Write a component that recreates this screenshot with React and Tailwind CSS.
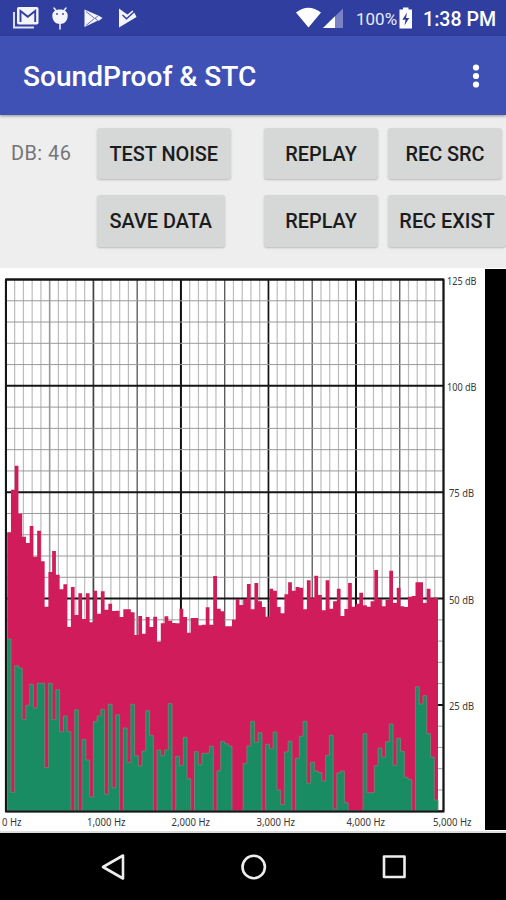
import { useState } from "react";

const ZERO = 811
const BAR = 3.746
const START = 7.2

// top edge of every bar, left to right
const sourceTops = [
    532.3, 489.7, 465.7, 513.7, 536.7, 543, 526, 556.7, 530.7, 561.3, 606.7, 572, 551, 574.7, 589.3, 584.3,
    627, 587, 615, 593.3, 619, 593.3, 622.3, 590.7, 613.7, 591.3, 609.7, 603.7, 611, 610.7, 617, 609.3,
    609.3, 612.3, 635, 616, 633.7, 617, 627, 616.7, 641.7, 623.3, 616.3, 620.7, 623, 623.3, 608.7, 617,
    632.7, 618, 618, 625.3, 624.7, 607.3, 624.7, 576, 608.7, 611.3, 626.3, 626.3, 619.7, 599, 605, 599,
    584, 609.3, 583, 601.3, 607, 616.7, 588.7, 590.7, 607, 613.3, 594.3, 582.3, 590.7, 587, 587.7, 609.3,
    580.3, 598.3, 575.7, 595, 610.3, 580.3, 608.7, 601.3, 588.7, 616, 609, 583, 606.7, 603.7, 592.7, 605.3,
    606.7, 601.3, 570, 599, 606.3, 599.7, 570.7, 603, 587.7, 606.3, 607, 596.7, 596, 582.3, 582.3, 603,
    588.7, 598.3, 597.7,
]

const existTops = [
    639, 792.3, 665.7, 668, 719.7, 705.3, 684.3, 708, 683.3, 683.3, 767.7, 683.3, 719.7, 689.7, 731.7, 716,
    731.7, 811, 709.7, 811, 739.3, 760, 797, 721.7, 716, 709.3, 794.3, 704.3, 787.7, 714.7, 811, 728,
    762.7, 704.3, 755.7, 766, 751, 710.7, 735.3, 811, 750, 755.7, 750, 703.7, 811, 756.3, 765.3, 737.3,
    778.7, 811, 751.7, 764.7, 753.3, 753.3, 746.3, 811, 770.7, 741.3, 743.7, 746, 811, 811, 811, 763.3,
    746, 721.3, 742.3, 732.7, 811, 744.3, 748.7, 732, 790, 804.7, 752, 741.3, 811, 758.3, 736.3, 721.3,
    783.3, 762.3, 771, 772.7, 781, 755.3, 735.3, 809, 773, 771, 802.7, 811, 811, 811, 811, 733.7,
    792.7, 792.7, 765.7, 748, 757, 741.7, 724, 765.3, 738.3, 751.3, 777.3, 779.3, 811, 686.7, 704, 695.7,
    733.7, 757, 800,
]

const areaPath = (tops) => {
    let d = `M${START} ${ZERO}`
    tops.forEach((top, i) => {
        d += `V${top}H${(START + (i + 1) * BAR).toFixed(2)}`
    })
    return `${d}V${ZERO}Z`
}

const xLabels = [
    { text: "0 Hz", x: 2, width: 19.5 },
    { text: "1,000 Hz", x: 87, width: 38.5 },
    { text: "2,000 Hz", x: 171.5, width: 38.5 },
    { text: "3,000 Hz", x: 256.5, width: 38.5 },
    { text: "4,000 Hz", x: 346.5, width: 38.5 },
    { text: "5,000 Hz", x: 433, width: 38.5 },
]

const yLabels = [
    { text: "125 dB", x: 447, y: 285, width: 29.5 },
    { text: "100 dB", x: 447, y: 391, width: 29.5 },
    { text: "75 dB", x: 449, y: 497, width: 25 },
    { text: "50 dB", x: 449, y: 603.5, width: 25 },
    { text: "25 dB", x: 449, y: 709.5, width: 25 },
]

const verticalLine = (i) => {
    if (i % 20 === 0) return { color: "#111", width: 2 }
    if (i % 10 === 0) return { color: i === 30 ? "#111" : "#444", width: 1.7 }
    if (i % 5 === 0 && i > 5) return { color: "#555", width: 1.3 }
    if (i === 5) return { color: "#999", width: 1.6 }
    return { color: "#bcbcbc", width: 1.2 }
}

const Spectrum = () => (
    <svg className="block shrink-0" width="485" height="563" viewBox="0 268 485 563" fontFamily="'Noto Sans', 'Open Sans', sans-serif" fontSize="10" fill="#383838">
        {Array.from({ length: 51 }, (_, i) => {
            const x = 5.9 + i * 8.752
            const line = verticalLine(i)
            return <path key={i} d={`M${x} 280V811`} stroke={line.color} strokeWidth={line.width} />
        })}
        {Array.from({ length: 26 }, (_, i) => {
            const y = 279.5 + i * 21.27
            const major = i % 5 === 0
            return <path key={i} d={`M6 ${y}H443.5`} stroke={major ? "#151515" : "#999"} strokeWidth={major ? 2 : 1} />
        })}
        <path d={areaPath(sourceTops)} fill="#d01c5a" />
        <path d={areaPath(existTops)} fill="#1a8c64" stroke="#6f8574" strokeWidth="0.9" />
        <path d="M6 279.5H443.5V811.5H6Z" fill="none" stroke="#151515" strokeWidth="2" />
        {xLabels.map((label) => (
            <text key={label.text} x={label.x} y="826.3" textLength={label.width} lengthAdjust="spacingAndGlyphs">{label.text}</text>
        ))}
        {yLabels.map((label) => (
            <text key={label.text} x={label.x} y={label.y} textLength={label.width} lengthAdjust="spacingAndGlyphs">{label.text}</text>
        ))}
    </svg>
)

const StatusBar = () => (
    <div className="flex h-9 items-center bg-[#303f9f] text-white">
        <svg className="ml-3 shrink-0" width="28" height="24" viewBox="12 6 28 24">
            <path d="M14 12V27.5H34" fill="none" stroke="#dfe2f5" strokeWidth="1.9" />
            <rect x="17" y="7" width="21.5" height="17.5" rx="1.8" fill="#f3f4fc" />
            <path d="M20.5 22V11L27.8 16.8L35.2 11V22" fill="none" stroke="#303f9f" strokeWidth="1.9" />
        </svg>
        <svg className="ml-[11px] shrink-0" width="18" height="24" viewBox="51 6 18 24">
            <path d="M54 8L56.5 11M66 8L63.5 11M60 22V29" stroke="#f3f4fc" strokeWidth="1.5" strokeLinecap="round" />
            <path d="M52.3 15.5C52.3 11.5 55.5 9.4 60 9.4S67.7 11.5 67.7 15.5C67.7 20.5 64.5 24 60 24S52.3 20.5 52.3 15.5Z" fill="#f3f4fc" />
            <circle cx="57" cy="14" r="0.9" fill="#303f9f" />
            <circle cx="63" cy="14" r="0.9" fill="#303f9f" />
        </svg>
        <svg className="ml-[14px] shrink-0" width="20" height="20" viewBox="83 8 20 20">
            <path d="M84.5 9.5L97 15L98.5 15.5L102.5 18L98.5 21L97 21L84.5 27Z" fill="#f3f4fc" />
            <path d="M86 11.5L94.5 18.3L86 25.5M95 18.3L98.5 15.5M95 18.3L98.5 21" fill="none" stroke="#303f9f" strokeWidth="0.7" />
        </svg>
        <svg className="ml-[14px] shrink-0" width="20" height="20" viewBox="117 8 20 20">
            <path d="M119 8.5L124.5 12.5L127.5 14.5L132.5 10.5L134.5 13L136.5 17L119 27.5Z" fill="#f3f4fc" />
            <path d="M122.5 15L126.5 18.8L134.5 11.5" fill="none" stroke="#303f9f" strokeWidth="1.4" />
        </svg>
        <svg className="ml-auto shrink-0" width="49" height="22" viewBox="296 7 49 22">
            <path d="M297 12.5Q309.300 3 322 12.5L309.5 27.5Z" fill="#fff" />
            <path d="M344 8.5V28H324Z" fill="#7882c4" />
            <path d="M336 16.3V28H324Z" fill="#fff" />
        </svg>
        <span className="ml-[12px] w-[41px] pt-[3px] text-[17px] whitespace-nowrap text-[#e8eafa]">100%</span>
        <svg className="ml-[2px] shrink-0" width="14" height="22" viewBox="398.5 6 14 22">
            <path d="M402.5 6.5H408V8.5H411.5V27.5H399V8.5H402.5Z" fill="#fff" />
            <path d="M406.5 11.5L401.8 18.8H405L404 24.5L408.7 17H405.5Z" fill="#303f9f" />
        </svg>
        <span className="ml-[10px] w-[83px] pt-[3px] text-[19.6px] font-medium whitespace-nowrap">1:38 PM</span>
    </div>
)

const Button = ({ children, className, onClick }) => (
    <button onClick={onClick} className={`h-[51.5px] shrink-0 rounded-[3px] bg-[#d6d7d7] pt-[3px] text-center text-[19.9px] font-medium whitespace-nowrap text-[#1c1c1c] shadow-[0_1px_2px_rgba(0,0,0,0.22)] ${className}`}>
        {children}
    </button>
)

const App = () => {
    const [db] = useState(46)

    return (
        <div className="flex h-[900px] w-[506px] flex-col overflow-hidden bg-black font-['Roboto',sans-serif]">
            <StatusBar />
            <header className="z-10 flex h-[79px] shrink-0 items-center justify-between bg-[#3f51b5] pr-[26px] pl-[23px] text-white shadow-[0_1px_3px_rgba(0,0,0,0.4)]">
                <h1 className="pt-1 text-[28.1px] font-medium whitespace-nowrap">SoundProof &amp; STC</h1>
                <svg width="8" height="26" viewBox="0 0 8 26" fill="#fff">
                    <circle cx="4" cy="4.5" r="3.1" />
                    <circle cx="4" cy="13" r="3.1" />
                    <circle cx="4" cy="21.5" r="3.1" />
                </svg>
            </header>
            <section className="flex h-[153px] shrink-0 flex-col gap-4 bg-[#eee] pt-[12.5px] pl-[11px]">
                <div className="flex">
                    <p className="w-[86px] shrink-0 pt-[11px] text-[19.9px] tracking-[0.45px] text-[#757575]">DB: {db}</p>
                    <div className="w-[167px] shrink-0">
                        <Button className="w-[133.5px]">TEST NOISE</Button>
                    </div>
                    <div className="flex gap-2.5">
                        <Button className="w-[114px]">REPLAY</Button>
                        <Button className="w-[114px]">REC SRC</Button>
                    </div>
                </div>
                <div className="flex pl-[86px]">
                    <div className="w-[167px] shrink-0">
                        <Button className="w-[127.5px]">SAVE DATA</Button>
                    </div>
                    <div className="flex gap-2.5">
                        <Button className="w-[114px]">REPLAY</Button>
                        <Button className="w-[118px]">REC EXIST</Button>
                    </div>
                </div>
            </section>
            <main className="flex h-[565px] shrink-0 border-b-2 border-[#ddd] bg-white">
                <Spectrum />
                <div className="mt-px h-[561px] flex-1 bg-black" />
            </main>
            <nav className="flex flex-1 items-center justify-between pr-[100px] pl-[101px]">
                <svg width="24" height="28" viewBox="0 0 24 28" fill="none" stroke="#eee" strokeWidth="2.6" strokeLinejoin="round">
                    <path d="M22 2.5V25.5L2 14Z" />
                </svg>
                <svg width="28" height="28" viewBox="0 0 28 28" fill="none" stroke="#eee" strokeWidth="2.6">
                    <circle cx="13.7" cy="14" r="11.2" />
                </svg>
                <svg width="24" height="24" viewBox="0 0 24 24" fill="none" stroke="#eee" strokeWidth="2.6" strokeLinejoin="round">
                    <rect x="2" y="1.5" width="20.5" height="20.5" />
                </svg>
            </nav>
        </div>
    );
}

export default App;
